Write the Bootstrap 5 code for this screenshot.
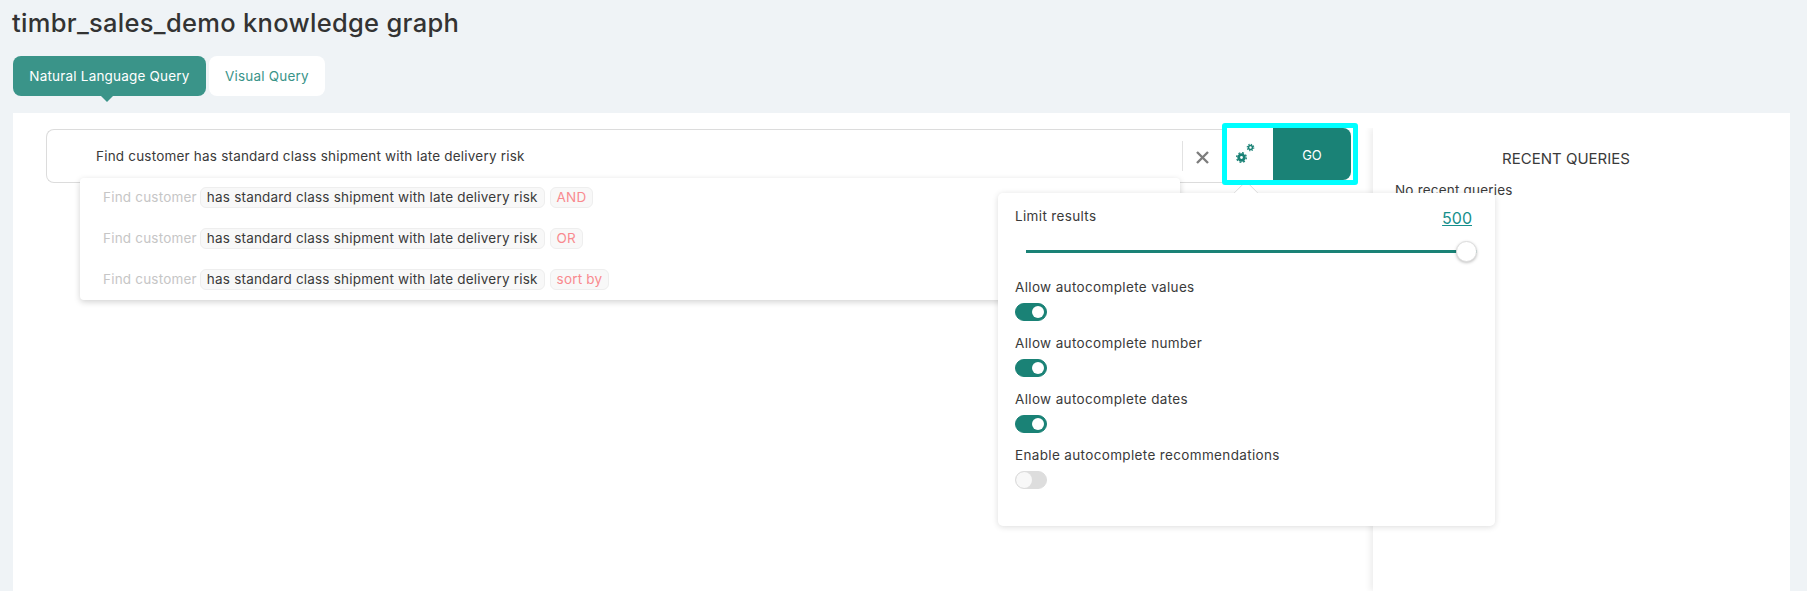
<!DOCTYPE html>
<html lang="en">
<head>
  <meta charset="UTF-8" />
  <title>timbr_sales_demo knowledge graph</title>
  <link href="https://cdn.jsdelivr.net/npm/bootstrap@5.3.1/dist/css/bootstrap.min.css" rel="stylesheet">
  <style>
    html, body { height: 100%; }
    body {
      background-color: #eff3f6;
      color: #3a3a3a;
      font-family: "Inter", "Liberation Sans", sans-serif;
      font-size: 13.5px;
      letter-spacing: .2px;
      overflow: hidden;
    }
    .page-wrap { height: 100%; display: flex; flex-direction: column; padding: 0 17px 0 13px; }
    .page-title { font-size: 25.5px; font-weight: 500; line-height: 34px; margin: 6px 0 16px -1px; color: #333; letter-spacing: .3px; }

    .tab-row { gap: 3px; margin-bottom: 17px; }
    .tab-row .nav-link {
      height: 40px; padding: 0 16px; line-height: 40px; font-size: 13.5px; border-radius: 8px;
      background: #fff; color: #3a9489; position: relative;
    }
    .tab-row .nav-link.active { background: #3a9489; color: #fff; width: 193px; padding: 0; text-align: center; }
    .tab-row .nav-link.active::after {
      content: ""; position: absolute; left: 88px; bottom: -6px;
      border: 6px solid transparent; border-bottom: 0; border-top-color: #3a9489;
    }

    .main-panel { flex: 1; background: #fff; min-height: 0; }
    .query-col { width: 1360px; padding: 10px 15px 0 33px; height: 100%; position: relative; }
    .recent-col { flex: 1; margin-top: 15px; padding: 19px 0 0 22px; box-shadow: -3px 0 6px rgba(0,0,0,.07); clip-path: inset(0 0 0 -10px); }
    .recent-title { font-size: 15px; text-align: center; width: 342px; margin: 0 0 9px; font-weight: 400; line-height: 24px; letter-spacing: 0; }

    .query-box {
      flex: 1; height: 54px; margin-top: 6px; border: 1px solid #dcdcdc; border-right: 0;
      border-radius: 8px 0 0 8px; padding: 0 0 0 49px;
    }
    .query-text { flex: 1; }
    .clear-sep { width: 1px; height: 30px; background: #e2e2e2; }
    .clear-btn { width: 39px; text-align: center; }

    .hl-box { border: 5px solid #00ffff; border-radius: 3px; height: 62px; width: 136px; flex: none; position: relative; z-index: 4; background: #fff; }
    .gear-btn { width: 46px; padding-left: 8px; }
    .go-btn {
      width: 78px; height: 52px; padding: 3px 0 0; border: 0; border-radius: 0 8px 8px 0; font-size: 13px;
      background: #1a8276; color: #fff;
    }
    .go-btn:hover { background: #1a8276; color: #fff; }

    .suggest-list {
      position: absolute; left: 67px; top: 65px; width: 1100px; height: 122px; background: #fff;
      border-radius: 4px; box-shadow: 0 2px 6px rgba(0,0,0,.18); padding-top: 9px; z-index: 2;
    }
    .suggest-list .list-group-item {
      flex: none; border: 0; padding: 0 0 0 23px; height: 41px; display: flex; align-items: flex-start; gap: 3px;
      background: transparent; color: #3a3a3a;
    }
    .sg-dim { color: #c6c6c6; line-height: 21px; }
    .sg-pill { background: #f8f8f8; border: 1px solid #eee; border-radius: 6px; height: 21px; line-height: 19px; padding: 0 6px; }
    .sg-key { color: #f98a8f; margin-left: 2px; }

    .opt-pop {
      position: absolute; left: 985px; top: 80px; width: 497px; height: 333px; z-index: 3;
      border: 0; border-radius: 5px; box-shadow: 0 1px 6px rgba(0,0,0,.14); padding: 13px 17px;
      letter-spacing: .35px;
    }
    .opt-pop::before {
      content: ""; position: absolute; left: 239px; top: -9px; width: 18px; height: 18px;
      background: #fff; border: 1px solid #ddd; transform: rotate(45deg);
      clip-path: polygon(0 0, 100% 0, 0 100%);
    }
    .limit-val { color: #16908c; font-size: 16px; text-decoration: underline; line-height: 22px; margin: 1px 6px 0 0; letter-spacing: 0; }
    .form-range { height: 22px; padding: 0; display: block; width: 451px; margin: 11px 0 14px 11px; }
    .form-range::-webkit-slider-runnable-track { height: 3px; background: #1a8276; border-radius: 0; }
    .form-range::-webkit-slider-thumb {
      width: 21px; height: 21px; margin-top: -9px; background: #fff; border: 1px solid #ddd;
      box-shadow: 0 1px 3px rgba(0,0,0,.25);
    }
    .opt-row { margin-bottom: 11px; }
    .opt-row .form-label { display: block; margin: 0 0 5px; line-height: 22px; }
    .opt-row .form-switch { padding: 0; margin: 0; min-height: 0; height: 18px; }
    .opt-row .form-check-input {
      width: 32px; height: 18px; margin: 0; float: none; display: block; border-color: #ddd; background-color: #ddd;
      --bs-form-switch-bg: url("data:image/svg+xml,%3csvg xmlns='http://www.w3.org/2000/svg' viewBox='-4 -4 8 8'%3e%3ccircle r='4' fill='%23f8f8f8'/%3e%3c/svg%3e");
    }
    .opt-row .form-check-input:checked { background-color: #1a8276; border-color: #1a8276; }
    .opt-row .form-check-input:focus { box-shadow: none; }
  </style>
</head>
<body>
  <div class="page-wrap">
    <h1 class="page-title">timbr_sales_demo knowledge graph</h1>
    <ul class="nav tab-row">
      <li class="nav-item"><a class="nav-link active" href="#">Natural Language Query</a></li>
      <li class="nav-item"><a class="nav-link" href="#">Visual Query</a></li>
    </ul>
    <div class="main-panel d-flex">
      <div class="query-col">
        <div class="d-flex align-items-start">
          <div class="query-box d-flex align-items-center">
            <span class="query-text">Find customer has standard class shipment with late delivery risk</span>
            <span class="clear-sep"></span>
            <span class="clear-btn">
              <svg width="13" height="13" viewBox="0 0 13 13"><path d="M1 1 12 12M12 1 1 12" stroke="#7d7d7d" stroke-width="2.4"/></svg>
            </span>
          </div>
          <div class="hl-box d-flex align-items-center">
            <span class="gear-btn d-flex">
              <svg width="22" height="22" viewBox="0 0 22 22" fill="none" stroke="#1a8276">
                <circle cx="6.5" cy="14.5" r="2.8" stroke-width="2.8"/>
                <circle cx="6.5" cy="14.5" r="4.8" stroke-width="1.4" stroke-dasharray="1.9 1.87"/>
                <circle cx="15.5" cy="4.5" r="2" stroke-width="1.6"/>
                <circle cx="15.5" cy="4.5" r="3.3" stroke-width="1.1" stroke-dasharray="1.3 1.29"/>
              </svg>
            </span>
            <button class="btn go-btn" type="button">GO</button>
          </div>
        </div>

        <ul class="list-group suggest-list">
          <li class="list-group-item"><span class="sg-dim">Find customer</span><span class="sg-pill">has standard class shipment with late delivery risk</span><span class="sg-pill sg-key">AND</span></li>
          <li class="list-group-item"><span class="sg-dim">Find customer</span><span class="sg-pill">has standard class shipment with late delivery risk</span><span class="sg-pill sg-key">OR</span></li>
          <li class="list-group-item"><span class="sg-dim">Find customer</span><span class="sg-pill">has standard class shipment with late delivery risk</span><span class="sg-pill sg-key">sort by</span></li>
        </ul>

        <div class="card opt-pop">
          <div class="d-flex justify-content-between">
            <span>Limit results</span>
            <span class="limit-val">500</span>
          </div>
          <input type="range" class="form-range" min="0" max="500" value="500">
          <div class="opt-row">
            <label class="form-label">Allow autocomplete values</label>
            <div class="form-check form-switch"><input class="form-check-input" type="checkbox" checked></div>
          </div>
          <div class="opt-row">
            <label class="form-label">Allow autocomplete number</label>
            <div class="form-check form-switch"><input class="form-check-input" type="checkbox" checked></div>
          </div>
          <div class="opt-row">
            <label class="form-label">Allow autocomplete dates</label>
            <div class="form-check form-switch"><input class="form-check-input" type="checkbox" checked></div>
          </div>
          <div class="opt-row">
            <label class="form-label">Enable autocomplete recommendations</label>
            <div class="form-check form-switch"><input class="form-check-input" type="checkbox"></div>
          </div>
        </div>
      </div>
      <div class="recent-col">
        <h5 class="recent-title">RECENT QUERIES</h5>
        <div>No recent queries</div>
      </div>
    </div>
  </div>
  <script src="https://cdn.jsdelivr.net/npm/bootstrap@5.3.1/dist/js/bootstrap.bundle.min.js"></script>
</body>
</html>
